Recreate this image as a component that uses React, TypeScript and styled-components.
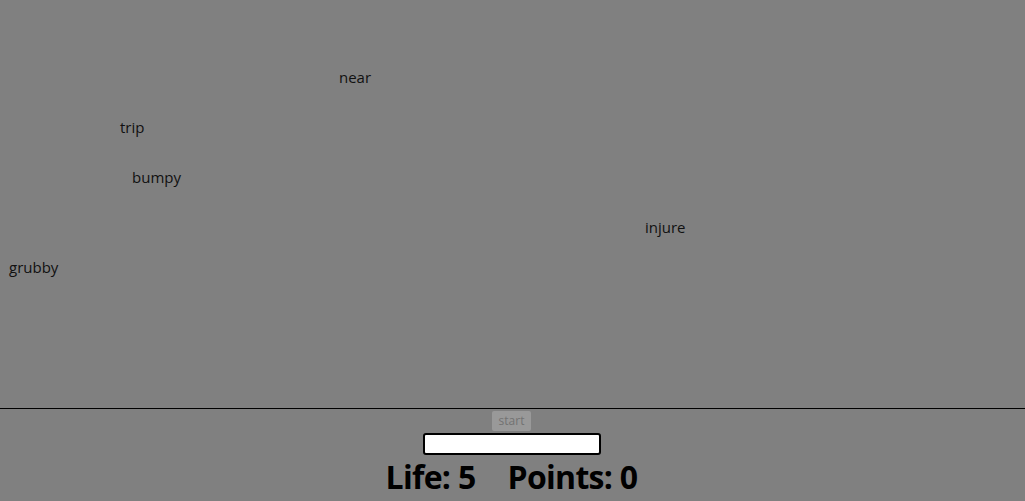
import React from "react";
import styled, { createGlobalStyle } from "styled-components";

const Global = createGlobalStyle`
  html, body { margin: 0; padding: 0; background: #808080; }
  body { font-family: "Open Sans", "Noto Sans", sans-serif; color: #000; }
`;

const Page = styled.div`
  display: flex;
  flex-direction: column;
  width: 1025px;
  height: 501px;
  overflow: hidden;
`;

const Field = styled.div`
  position: relative;
  height: 408px;
  border-bottom: 1px solid #000;
  flex: none;
`;

const Word = styled.span`
  position: absolute;
  font-size: 15px;
  line-height: 20px;
  color: #111;
  white-space: nowrap;
`;

const Controls = styled.div`
  display: flex;
  flex-direction: column;
  align-items: center;
  padding-right: 2px;
`;

const StartButton = styled.button`
  margin-top: 2px;
  width: 39px;
  height: 20px;
  padding: 0;
  border: none;
  border-radius: 2px;
  background: #999999;
  color: #727272;
  font-family: "Open Sans", sans-serif;
  font-size: 12px;
  line-height: 20px;
`;

const Input = styled.input`
  margin-top: 2px;
  box-sizing: border-box;
  width: 178px;
  height: 22px;
  border: 2px solid #000;
  border-radius: 3px;
  background: #fff;
  outline: none;
  padding: 0 2px;
  caret-color: #000;
`;

const Score = styled.h1`
  margin: 0;
  display: flex;
  gap: 32px;
  font-family: "Open Sans", sans-serif;
  font-weight: 700;
  font-size: 32px;
  line-height: 44px;
  letter-spacing: -0.7px;
`;

const words = [
  { text: "near", x: 339, y: 67 },
  { text: "trip", x: 120, y: 117 },
  { text: "bumpy", x: 132, y: 167 },
  { text: "injure", x: 645, y: 217 },
  { text: "grubby", x: 9, y: 257 },
];

export default function App() {
  return (
    <Page>
      <Global />
      <Field>
        {words.map((w) => (
          <Word key={w.text} style={{ left: w.x, top: w.y }}>
            {w.text}
          </Word>
        ))}
      </Field>
      <Controls>
        <StartButton disabled>start</StartButton>
        <Input autoFocus />
        <Score>
          <span>Life: 5</span>
          <span>Points: 0</span>
        </Score>
      </Controls>
    </Page>
  );
}
